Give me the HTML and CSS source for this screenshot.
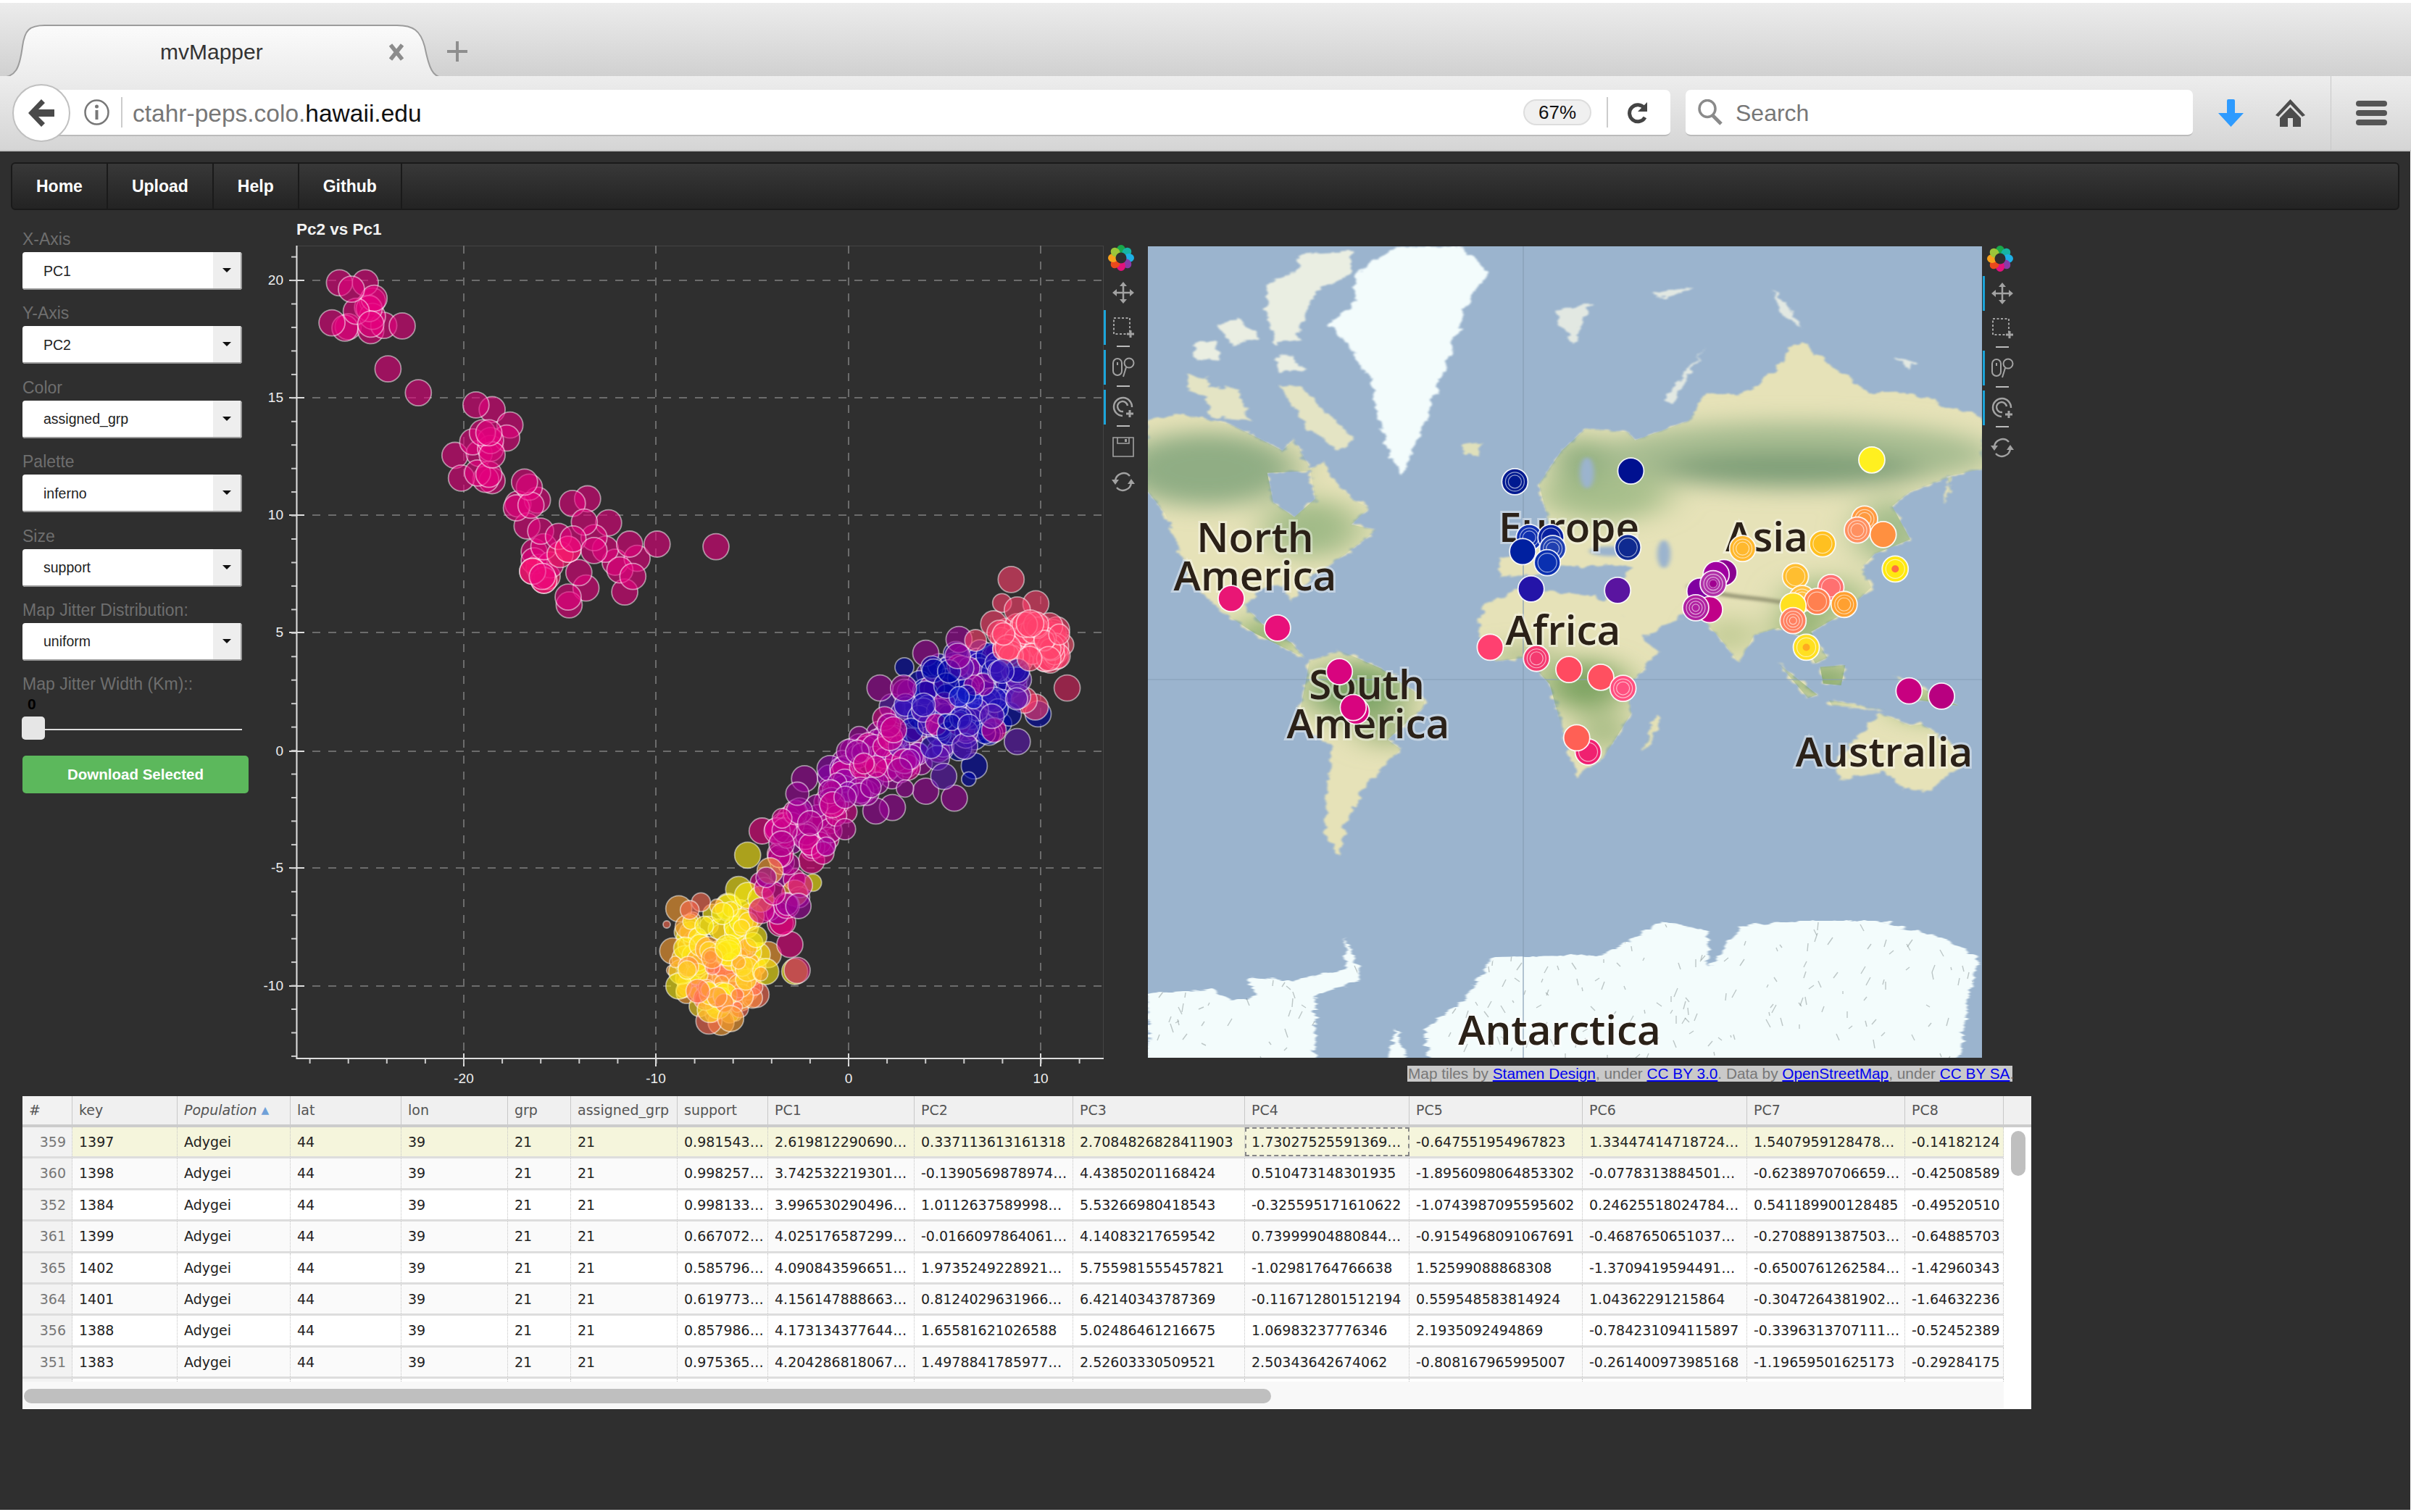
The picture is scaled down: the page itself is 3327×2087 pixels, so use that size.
FILE: index.html
```html
<!DOCTYPE html>
<html lang="en">
  <head>
    <meta charset="UTF-8" />
    <title>mvMapper</title>
    <link rel="stylesheet" href="styles.css">
  </head>
  <body>
    <svg class="icon-defs" width="0" height="0">
      <symbol id="i-pan" viewBox="0 0 32 32">
        <path d="M16 5v22M5 16h22" fill="none" stroke="currentColor" stroke-width="2.5"/>
        <path d="M16 1l5 6h-10zM16 31l-5-6h10zM1 16l6-5v10zM31 16l-6 5v-10z" fill="currentColor"/>
      </symbol>
      <symbol id="i-box" viewBox="0 0 32 32">
        <rect x="3" y="3" width="22" height="22" fill="none" stroke="currentColor" stroke-width="2" stroke-dasharray="3 2.5"/>
        <path d="M26 20v10M21 25h10" stroke="currentColor" stroke-width="3"/>
      </symbol>
      <symbol id="i-wheel" viewBox="0 0 32 32">
        <rect x="2" y="4" width="12" height="23" rx="6" fill="none" stroke="currentColor" stroke-width="2"/>
        <path d="M8 9v4" stroke="currentColor" stroke-width="2"/>
        <circle cx="24" cy="10" r="6.5" fill="none" stroke="currentColor" stroke-width="2"/>
        <path d="M20 16L16 29" stroke="currentColor" stroke-width="2"/>
      </symbol>
      <symbol id="i-tap" viewBox="0 0 32 32">
        <path d="M15 28a12.5 12.5 0 1 1 13-12" fill="none" stroke="currentColor" stroke-width="2.5"/>
        <path d="M16 22a7 7 0 1 1 6-8" fill="none" stroke="currentColor" stroke-width="2.5"/>
        <path d="M25 20v10M20 25h10" stroke="currentColor" stroke-width="3"/>
      </symbol>
      <symbol id="i-save" viewBox="0 0 32 32">
        <path d="M2 3h28v26h-28zM8 3v8h16v-8" fill="none" stroke="currentColor" stroke-width="1.6"/>
        <rect x="18" y="5" width="3" height="4" fill="currentColor"/>
      </symbol>
      <symbol id="i-reset" viewBox="0 0 32 32">
        <path d="M5 15a11.5 11.5 0 0 1 20-7M27 17a11.5 11.5 0 0 1-20 7" fill="none" stroke="currentColor" stroke-width="2.5"/>
        <path d="M0 13h10l-5 7zM22 19h10l-5-7z" fill="currentColor"/>
      </symbol>
      <symbol id="i-logo" viewBox="0 0 36 36">
        <g transform="translate(18 18)">
          <ellipse cx="0" cy="-11" rx="6" ry="7" fill="#19a84c"/>
          <ellipse cx="0" cy="-11" rx="6" ry="7" fill="#17b3a4" transform="rotate(45)"/>
          <ellipse cx="0" cy="-11" rx="6" ry="7" fill="#1eb0e6" transform="rotate(90)"/>
          <ellipse cx="0" cy="-11" rx="6" ry="7" fill="#8a3aa8" transform="rotate(135)"/>
          <ellipse cx="0" cy="-11" rx="6" ry="7" fill="#e3127c" transform="rotate(180)"/>
          <ellipse cx="0" cy="-11" rx="6" ry="7" fill="#ea4a1c" transform="rotate(225)"/>
          <ellipse cx="0" cy="-11" rx="6" ry="7" fill="#f7a11c" transform="rotate(270)"/>
          <ellipse cx="0" cy="-11" rx="6" ry="7" fill="#9cc63a" transform="rotate(315)"/>
          <circle r="7.5" fill="#2f2f2f"/>
        </g>
      </symbol>
    </svg>

    <div class="tabstrip">
      <div class="tab">
        <svg class="tab-shape" viewBox="0 0 610 75" preserveAspectRatio="none">
          <defs>
            <linearGradient id="tab-fill" x1="0" y1="0" x2="0" y2="1">
              <stop offset="0" stop-color="#fbfbfb"/>
              <stop offset="1" stop-color="#ececec"/>
            </linearGradient>
          </defs>
          <path d="M0 73C22 73 27 60 31 30C34 8 40 1 62 1H548C570 1 580 8 586 30C592 60 597 73 612 73V75H0Z" fill="url(#tab-fill)"/>
          <path d="M0 73C22 73 27 60 31 30C34 8 40 1 62 1H548C570 1 580 8 586 30C592 60 597 73 612 73" fill="none" stroke="#9c9c9c" stroke-width="2"/>
        </svg>
        <span class="tab-title">mvMapper</span>
        <svg class="tab-close" width="20" height="24" viewBox="0 0 20 24">
          <path d="M2 2L18 22M18 2L2 22" stroke="#8c8c8c" stroke-width="5.500"/>
        </svg>
      </div>
      <svg class="tab-new" width="28" height="28" viewBox="0 0 28 28">
        <path d="M14 0V28M0 14H28" stroke="#8e8e8e" stroke-width="4"/>
      </svg>
    </div>

    <div class="toolbar">
      <div class="back-btn">
        <svg width="38" height="40" viewBox="0 0 38 40"><path d="M19 1L1 20L19 39L24 34L15 25H37V15H15L24 6Z" fill="#4a4a4a"/></svg>
      </div>
      <div class="urlbar">
        <svg class="info-icon" width="35" height="36" viewBox="0 0 35 36">
          <ellipse cx="17.5" cy="18" rx="16" ry="16.5" fill="none" stroke="#777" stroke-width="2.5"/>
          <path d="M17.5 15v13" stroke="#777" stroke-width="4"/>
          <circle cx="17.5" cy="10" r="2.5" fill="#777"/>
        </svg>
        <span class="url-sep"></span>
        <span class="url"><span class="url-sub">ctahr-peps.colo.</span>hawaii.edu</span>
        <span class="zoom-pill">67%</span>
        <span class="url-sep pill-sep"></span>
        <svg class="reload-icon" width="30" height="31" viewBox="0 0 30 31">
          <path d="M24 9A11.5 11.5 0 1 0 25 22" fill="none" stroke="#444" stroke-width="5"/>
          <path d="M28 1V14H15Z" fill="#444"/>
        </svg>
      </div>
      <div class="searchbar">
        <svg width="36" height="36" viewBox="0 0 36 36">
          <ellipse cx="14" cy="13" rx="11" ry="11.5" fill="none" stroke="#8a8a8a" stroke-width="3.5"/>
          <path d="M21 22L33 34" stroke="#8a8a8a" stroke-width="5"/>
        </svg>
        <span class="search-text">Search</span>
      </div>
      <svg class="tb-download" width="37" height="38" viewBox="0 0 37 38">
        <path d="M13 2Q13 0 15 0H22Q24 0 24 2V19H36L18.5 38L1 19H13Z" fill="#2e9bff"/>
      </svg>
      <svg class="tb-home" width="41" height="38" viewBox="0 0 41 38">
        <path d="M20.500 0L41 22L37 24L20.500 7L4 24L0 22Z" fill="#4d4d4d"/>
        <path d="M20.500 11L35 26V38H24V26H17V38H6V26Z" fill="#4d4d4d"/>
      </svg>
      <span class="tb-divider"></span>
      <div class="tb-menu"><span></span><span></span><span></span></div>
    </div>

    <div class="page">
      <nav class="navbar">
        <a class="nav-item">Home</a>
        <a class="nav-item">Upload</a>
        <a class="nav-item">Help</a>
        <a class="nav-item">Github</a>
      </nav>

      <div class="plots">
        <div class="sidebar">
          <div class="field">
            <label>X-Axis</label>
            <div class="select"><span class="select-value">PC1</span><span class="select-btn"><i></i></span></div>
          </div>
          <div class="field">
            <label>Y-Axis</label>
            <div class="select"><span class="select-value">PC2</span><span class="select-btn"><i></i></span></div>
          </div>
          <div class="field">
            <label>Color</label>
            <div class="select"><span class="select-value">assigned_grp</span><span class="select-btn"><i></i></span></div>
          </div>
          <div class="field">
            <label>Palette</label>
            <div class="select"><span class="select-value">inferno</span><span class="select-btn"><i></i></span></div>
          </div>
          <div class="field">
            <label>Size</label>
            <div class="select"><span class="select-value">support</span><span class="select-btn"><i></i></span></div>
          </div>
          <div class="field">
            <label>Map Jitter Distribution:</label>
            <div class="select"><span class="select-value">uniform</span><span class="select-btn"><i></i></span></div>
          </div>
          <div class="field field-slider">
            <label>Map Jitter Width (Km)::</label>
            <div class="slider-value">0</div>
            <div class="slider"><span class="slider-handle"></span></div>
          </div>
          <button class="download-btn">Download Selected</button>
        </div>

        <div class="chart-col">
          <div class="plot-title">Pc2 vs Pc1</div>
          <div class="plot-row">
            <svg class="scatter" width="1163" height="1162" viewBox="360 338 1163 1162">
              <rect x="409" y="338" width="1114" height="1122" fill="none" stroke="#444" stroke-width="2"/>
              <g id="scatter-grid"></g>
              <g id="scatter-points"></g>
              <g id="scatter-axes"></g>
              <g class="tick-labels tick-left">
                <text x="391" y="392">20</text>
                <text x="391" y="554">15</text>
                <text x="391" y="716">10</text>
                <text x="391" y="878">5</text>
                <text x="391" y="1042">0</text>
                <text x="391" y="1203">-5</text>
                <text x="391" y="1366">-10</text>
              </g>
              <g class="tick-labels tick-bottom">
                <text x="640" y="1494">-20</text>
                <text x="905" y="1494">-10</text>
                <text x="1171" y="1494">0</text>
                <text x="1436" y="1494">10</text>
              </g>
            </svg>
            <div class="tools">
              <svg class="tool-logo"><use href="#i-logo"/></svg>
              <div class="tool"><svg><use href="#i-pan"/></svg></div>
              <div class="tool active"><svg><use href="#i-box"/></svg></div>
              <span class="tool-sep"></span>
              <div class="tool active"><svg><use href="#i-wheel"/></svg></div>
              <span class="tool-sep"></span>
              <div class="tool active"><svg><use href="#i-tap"/></svg></div>
              <span class="tool-sep"></span>
              <div class="tool"><svg><use href="#i-save"/></svg></div>
              <div class="tool"><svg><use href="#i-reset"/></svg></div>
            </div>
          </div>
        </div>

        <div class="map-col">
          <div class="plot-row">
            <svg class="map" width="1151" height="1120" viewBox="1584 339 1151 1120">
              <defs>
                <filter id="coast" x="-5%" y="-5%" width="110%" height="110%">
                  <feTurbulence type="fractalNoise" baseFrequency="0.05" numOctaves="3" seed="4"/>
                  <feDisplacementMap in="SourceGraphic" scale="22" xChannelSelector="R" yChannelSelector="G"/>
                  <feGaussianBlur stdDeviation="2"/>
                </filter>
                <filter id="soft" x="-40%" y="-40%" width="180%" height="180%">
                  <feGaussianBlur stdDeviation="30"/>
                </filter>
                <filter id="ridge" x="-20%" y="-50%" width="140%" height="200%">
                  <feGaussianBlur stdDeviation="4"/>
                </filter>
                <path id="land-na" fill-rule="evenodd" clip-rule="evenodd" d="M101 505L160 492L240 520L290 560L325 590L345 560L372 640L395 620L415 680L445 725L470 745L440 790L482 805L430 870L385 920L352 965L340 1000L328 952L290 962L262 1010L292 1060L340 1110L362 1150L330 1125L280 1085L232 1035L180 965L155 860L130 760L101 700Z M300 650L372 645L380 720L345 770L310 730Z"/>
                <path id="land-eu" d="M690 930L690 880L760 850L768 780L752 680L790 590L830 530L900 540L912 562L1000 510L1030 430L1080 440L1130 400L1190 290L1230 350L1300 432L1360 430L1490 500L1490 640L1430 660L1440 700L1425 735L1440 660L1370 700L1340 740L1370 830L1310 870L1290 905L1305 960L1260 1030L1205 1080L1232 1150L1212 1165L1185 1090L1150 1070L1110 1090L1085 1165L1055 1100L1010 1022L985 1040L920 1105L890 1030L860 1000L905 905L860 900L780 905L740 930Z"/>
                <path id="land-af" d="M660 1010L720 962L840 982L880 1010L930 1110L952 1132L900 1230L906 1300L860 1420L815 1475L790 1340L770 1222L730 1150L680 1160L650 1080Z M945 1310L925 1400L935 1395L952 1320Z"/>
                <path id="land-sa" d="M370 1160L420 1130L490 1180L562 1262L560 1285L500 1372L522 1398L460 1503L432 1594L420 1692L395 1620L400 1496L410 1392L350 1330L360 1250Z"/>
                <path id="land-au" d="M1250 1420L1320 1300L1370 1335L1390 1330L1470 1420L1400 1510L1360 1503L1330 1457L1250 1483Z M1340 1195L1450 1280L1385 1265Z M1220 1175L1262 1170L1255 1225L1225 1220Z M1150 1165L1215 1250L1200 1260Z M1235 1265L1330 1290L1240 1280Z"/>
                <path id="land-ice" d="M101 1110L210 1095L240 1140L280 1120L270 1040L340 1060L430 1010L430 880L450 1000L450 1060L380 1120L380 1390L101 1390Z M500 1390L515 1250L530 1390Z M570 1390L560 1260L620 1150L680 960L860 950L960 810L1030 850L1035 1000L1090 830L1180 810L1320 810L1420 880L1485 960L1470 1100L1450 1390Z"/>
                <clipPath id="land-clip" transform="translate(1500 320) scale(.8292 .5102)">
                  <use href="#land-na"/><use href="#land-eu"/><use href="#land-af"/><use href="#land-sa"/><use href="#land-au"/>
                </clipPath>
                <clipPath id="ice-clip" transform="translate(1500 1000) scale(.8292 .3333)">
                  <use href="#land-ice"/>
                </clipPath>
              </defs>
              <rect x="1584" y="339" width="1151" height="1120" fill="#9bb4ce"/>
              <g transform="translate(1500 320) scale(.8292 .5102)" filter="url(#coast)">
                <use href="#land-na" fill="#e6e2b8"/>
                <use href="#land-eu" fill="#e6e2b8"/>
                <use href="#land-af" fill="#e6e2b8"/>
                <use href="#land-sa" fill="#e6e2b8"/>
                <use href="#land-au" fill="#e6e2b8"/>
                <path d="M320 410L360 420L400 490L445 560L420 590L370 530L340 470Z M190 420L250 420L270 510L210 500Z M165 385L200 395L205 440L170 430Z" fill="#e4e4c4"/>
                <path d="M625 575L660 565L650 600L630 600Z" fill="#dfe0bb"/>
                <path d="M300 140L350 100L350 60L440 50L440 110L380 160L350 290L310 300L300 220Z M215 250L250 230L290 290L240 300Z M180 300L215 290L220 345L180 340Z M310 340L345 330L360 370L320 380Z" fill="#eaeee2"/>
                <path d="M780 210L840 190L810 300L790 260Z M1030 310L960 450L975 465L1005 370Z M1140 150L1195 260L1150 220Z M1345 340L1380 350L1370 370Z M940 165L1010 145L960 180Z" fill="#e2e8e2"/>
              </g>
              <g clip-path="url(#land-clip)">
                <g transform="translate(1500 320) scale(.8292 .5102)" filter="url(#soft)">
                  <ellipse cx="1180" cy="600" rx="330" ry="90" fill="#a8bd92"/>
                  <ellipse cx="1170" cy="640" rx="220" ry="50" fill="#7f9f78"/>
                  <ellipse cx="860" cy="710" rx="110" ry="70" fill="#a8bf8c"/>
                  <ellipse cx="820" cy="620" rx="45" ry="70" fill="#8fae7f"/>
                  <ellipse cx="1340" cy="810" rx="60" ry="90" fill="#a2bc8a"/>
                  <ellipse cx="1230" cy="990" rx="70" ry="55" fill="#a2bc84"/>
                  <ellipse cx="1070" cy="1090" rx="40" ry="50" fill="#bcc890"/>
                  <ellipse cx="1190" cy="1070" rx="40" ry="60" fill="#8cae6c"/>
                  <ellipse cx="200" cy="640" rx="150" ry="100" fill="#90ad84"/>
                  <ellipse cx="375" cy="800" rx="80" ry="80" fill="#a2bb88"/>
                  <ellipse cx="300" cy="1090" rx="55" ry="50" fill="#8fb070"/>
                  <ellipse cx="450" cy="1240" rx="85" ry="80" fill="#7da466"/>
                  <ellipse cx="500" cy="1345" rx="50" ry="45" fill="#a0b57f"/>
                  <ellipse cx="830" cy="1225" rx="70" ry="70" fill="#7fa463"/>
                  <ellipse cx="725" cy="1145" rx="60" ry="22" fill="#9ab078"/>
                  <ellipse cx="860" cy="1350" rx="40" ry="55" fill="#a0b87f"/>
                  <ellipse cx="1410" cy="1280" rx="70" ry="40" fill="#8fb070"/>
                  <ellipse cx="1230" cy="1210" rx="60" ry="50" fill="#86a96a"/>
                </g>
                <path transform="translate(1500 320) scale(.8292 .5102)" filter="url(#ridge)" d="M1000 955C1060 990 1120 985 1170 1005" fill="none" stroke="#8a8a6a" stroke-width="9"/>
              </g>
              <g transform="translate(1500 320) scale(.8292 .5102)" filter="url(#ridge)" fill="#9bb4ce">
                <ellipse cx="960" cy="870" rx="11" ry="38"/>
                <ellipse cx="870" cy="862" rx="34" ry="13"/>
                <ellipse cx="832" cy="650" rx="12" ry="42"/>
              </g>
              <g transform="translate(1500 320) scale(.8292 .5102)" filter="url(#coast)">
                <path d="M450 110L510 38L625 38L668 112L640 170L610 300L570 480L525 655L500 590L470 400L440 320L402 250L440 200Z" fill="#f3fcfc"/>
              </g>
              <g transform="translate(1500 1000) scale(.8292 .3333)" filter="url(#coast)">
                <use href="#land-ice" fill="#f3fcfc"/>
              </g>
              <g id="ice-noise" clip-path="url(#ice-clip)"></g>
              <path d="M2102 339V1459M1584 937H2735" stroke="#869db5" stroke-width="1.2" fill="none"/>
              <g class="map-label">
                <text x="1732" y="761">North</text>
                <text x="1732" y="814">America</text>
                <text x="2165" y="747">Europe</text>
                <text x="2438" y="760">Asia</text>
                <text x="2157" y="889">Africa</text>
                <text x="1886" y="964">South</text>
                <text x="1888" y="1018">America</text>
                <text x="2600" y="1057">Australia</text>
                <text x="2152" y="1441">Antarctica</text>
              </g>
              <g id="map-markers"></g>
            </svg>
            <div class="tools tools-map">
              <svg class="tool-logo"><use href="#i-logo"/></svg>
              <div class="tool active"><svg><use href="#i-pan"/></svg></div>
              <div class="tool"><svg><use href="#i-box"/></svg></div>
              <span class="tool-sep"></span>
              <div class="tool active"><svg><use href="#i-wheel"/></svg></div>
              <span class="tool-sep"></span>
              <div class="tool active"><svg><use href="#i-tap"/></svg></div>
              <span class="tool-sep"></span>
              <div class="tool"><svg><use href="#i-reset"/></svg></div>
            </div>
          </div>
          <div class="attribution">Map tiles by <a>Stamen Design</a>, under <a>CC BY 3.0</a>. Data by <a>OpenStreetMap</a>, under <a>CC BY SA</a>.</div>
        </div>
      </div>

      <div class="grid">
        <div class="grid-row grid-head">
          <div>#</div><div>key</div><div class="sorted">Population <span class="sort-arrow">▲</span></div><div>lat</div><div>lon</div><div>grp</div><div>assigned_grp</div><div>support</div><div>PC1</div><div>PC2</div><div>PC3</div><div>PC4</div><div>PC5</div><div>PC6</div><div>PC7</div><div>PC8</div>
        </div>
        <div class="grid-row selected">
          <div class="num">359</div><div>1397</div><div>Adygei</div><div>44</div><div>39</div><div>21</div><div>21</div><div>0.981543…</div><div>2.619812290690…</div><div>0.337113613161318</div><div>2.7084826828411903</div><div class="active-cell">1.73027525591369…</div><div>-0.647551954967823</div><div>1.33447414718724…</div><div>1.5407959128478…</div><div>-0.14182124</div>
        </div>
        <div class="grid-row odd">
          <div class="num">360</div><div>1398</div><div>Adygei</div><div>44</div><div>39</div><div>21</div><div>21</div><div>0.998257…</div><div>3.742532219301…</div><div>-0.1390569878974…</div><div>4.43850201168424</div><div>0.510473148301935</div><div>-1.8956098064853302</div><div>-0.0778313884501…</div><div>-0.6238970706659…</div><div>-0.42508589</div>
        </div>
        <div class="grid-row">
          <div class="num">352</div><div>1384</div><div>Adygei</div><div>44</div><div>39</div><div>21</div><div>21</div><div>0.998133…</div><div>3.996530290496…</div><div>1.0112637589998…</div><div>5.53266980418543</div><div>-0.325595171610622</div><div>-1.0743987095595602</div><div>0.24625518024784…</div><div>0.541189900128485</div><div>-0.49520510</div>
        </div>
        <div class="grid-row odd">
          <div class="num">361</div><div>1399</div><div>Adygei</div><div>44</div><div>39</div><div>21</div><div>21</div><div>0.667072…</div><div>4.025176587299…</div><div>-0.0166097864061…</div><div>4.14083217659542</div><div>0.73999904880844…</div><div>-0.9154968091067691</div><div>-0.4687650651037…</div><div>-0.2708891387503…</div><div>-0.64885703</div>
        </div>
        <div class="grid-row">
          <div class="num">365</div><div>1402</div><div>Adygei</div><div>44</div><div>39</div><div>21</div><div>21</div><div>0.585796…</div><div>4.090843596651…</div><div>1.9735249228921…</div><div>5.755981555457821</div><div>-1.02981764766638</div><div>1.52599088868308</div><div>-1.3709419594491…</div><div>-0.6500761262584…</div><div>-1.42960343</div>
        </div>
        <div class="grid-row odd">
          <div class="num">364</div><div>1401</div><div>Adygei</div><div>44</div><div>39</div><div>21</div><div>21</div><div>0.619773…</div><div>4.156147888663…</div><div>0.8124029631966…</div><div>6.42140343787369</div><div>-0.116712801512194</div><div>0.559548583814924</div><div>1.04362291215864</div><div>-0.3047264381902…</div><div>-1.64632236</div>
        </div>
        <div class="grid-row">
          <div class="num">356</div><div>1388</div><div>Adygei</div><div>44</div><div>39</div><div>21</div><div>21</div><div>0.857986…</div><div>4.173134377644…</div><div>1.65581621026588</div><div>5.02486461216675</div><div>1.06983237776346</div><div>2.1935092494869</div><div>-0.784231094115897</div><div>-0.3396313707111…</div><div>-0.52452389</div>
        </div>
        <div class="grid-row odd">
          <div class="num">351</div><div>1383</div><div>Adygei</div><div>44</div><div>39</div><div>21</div><div>21</div><div>0.975365…</div><div>4.204286818067…</div><div>1.4978841785977…</div><div>2.52603330509521</div><div>2.50343642674062</div><div>-0.808167965995007</div><div>-0.261400973985168</div><div>-1.19659501625173</div><div>-0.29284175</div>
        </div>
        <div class="grid-row grid-stub">
          <div></div><div></div><div></div><div></div><div></div><div></div><div></div><div></div><div></div><div></div><div></div><div></div><div></div><div></div><div></div><div></div>
        </div>
        <div class="hscroll"><span class="hscroll-thumb"></span></div>
        <span class="vscroll-thumb"></span>
      </div>
    </div>

    <script src="script.js"></script>
  </body>
</html>
```

FILE: styles.css
```css
html,
body {
  margin: 0;
  padding: 0;
  background-color: #fff;
}

body {
  width: 3327px;
  height: 2087px;
  overflow: hidden;
  font-family: "Liberation Sans", Arial, sans-serif;
}

.icon-defs {
  position: absolute;
}

/* browser chrome */
.tabstrip {
  display: flex;
  align-items: flex-end;
  box-sizing: border-box;
  height: 105px;
  margin-top: 4px;
  margin-bottom: -4px;
  background: linear-gradient(#ececec, #d0d0d0);
  border-bottom: 2px solid #aaa;
}

.tab {
  position: relative;
  display: flex;
  align-items: center;
  box-sizing: border-box;
  width: 610px;
  height: 75px;
  margin-bottom: -2px;
  padding: 0 0 0 221px;
}

.tab-shape {
  position: absolute;
  left: 0;
  top: 0;
  width: 610px;
  height: 75px;
}

.tab-title {
  position: relative;
  font-size: 30px;
  color: #333;
}

.tab-close {
  position: relative;
  margin-left: 174px;
}

.tab-new {
  margin-left: 7px;
  margin-bottom: 22px;
}

.toolbar {
  position: relative;
  display: flex;
  align-items: center;
  box-sizing: border-box;
  height: 104px;
  padding-left: 17px;
  background: linear-gradient(#ededed, #d5d5d5);
  border-bottom: 2px solid #c4c4c4;
}

.back-btn {
  position: relative;
  z-index: 1;
  display: flex;
  align-items: center;
  justify-content: center;
  box-sizing: border-box;
  flex: none;
  width: 80px;
  height: 80px;
  margin-right: -20px;
  background-color: #fff;
  border: 2px solid #c0c0c0;
  border-radius: 50%;
}

.urlbar {
  display: flex;
  align-items: center;
  box-sizing: border-box;
  width: 2228px;
  height: 64px;
  background-color: #fff;
  border-bottom: 2px solid #bbb;
  border-radius: 0 7px 7px 0;
}

.info-icon {
  margin-left: 39px;
}

.url-sep {
  width: 2px;
  height: 42px;
  margin-left: 16px;
  background-color: #ccc;
}

.url {
  margin-left: 14px;
  padding-top: 3px;
  font-size: 33.500px;
  color: #111;
}

.url-sub {
  color: #777;
}

.zoom-pill {
  margin-left: auto;
  box-sizing: border-box;
  width: 94px;
  height: 36px;
  line-height: 32px;
  text-align: center;
  font-size: 26px;
  color: #111;
  background-color: #f0f0f0;
  border: 2px solid #ddd;
  border-radius: 18px;
}

.pill-sep {
  margin-left: 21px;
}

.reload-icon {
  margin: 0 30px 0 26px;
}

.searchbar {
  display: flex;
  align-items: center;
  box-sizing: border-box;
  width: 700px;
  height: 64px;
  margin-left: 21px;
  padding-left: 16px;
  background-color: #fff;
  border-bottom: 2px solid #bbb;
  border-radius: 7px;
}

.search-text {
  margin-left: 17px;
  padding-top: 3px;
  font-size: 32px;
  color: #777;
}

.tb-download {
  margin-left: 34px;
}

.tb-home {
  margin-left: 43px;
}

.tb-divider {
  width: 1px;
  height: 102px;
  margin-left: 35px;
  background-color: #c8c8c8;
}

.tb-menu {
  display: flex;
  flex-direction: column;
  gap: 5px;
  margin-left: 34px;
}

.tb-menu span {
  display: block;
  width: 43px;
  height: 8px;
  background-color: #555;
  border-radius: 4px;
}

/* page */
.page {
  box-sizing: border-box;
  width: 3326px;
  height: 1875px;
  padding: 15px 0 0;
  background-color: #2f2f2f;
}

.navbar {
  display: flex;
  box-sizing: border-box;
  height: 66px;
  margin: 0 15px 11px;
  background: linear-gradient(#383838, #232323);
  border: 2px solid #1a1a1a;
  border-radius: 6px;
}

.nav-item {
  display: flex;
  align-items: center;
  box-sizing: border-box;
  padding: 0 33px;
  font-size: 23px;
  font-weight: bold;
  color: #fff;
  border-right: 2px solid #1a1a1a;
}

.plots {
  display: flex;
  height: 1212px;
}

.sidebar {
  box-sizing: border-box;
  flex: none;
  width: 360px;
  padding: 18px 0 0 31px;
}

.field {
  width: 303px;
  margin-bottom: 21.400px;
}

.field label {
  display: block;
  height: 22px;
  margin-bottom: 7px;
  line-height: 22px;
  font-size: 23px;
  white-space: nowrap;
  color: #6e6e6e;
}

.select {
  display: flex;
  align-items: center;
  height: 52px;
  background-color: #fff;
  border-radius: 4px;
  overflow: hidden;
  box-shadow: inset -2px -2px 0 #999;
}

.select-value {
  flex: 1;
  padding-left: 29px;
  font-size: 19.500px;
  color: #222;
}

.select-btn {
  display: flex;
  align-items: center;
  justify-content: center;
  align-self: stretch;
  width: 38px;
  margin-right: 2px;
  margin-bottom: 2px;
  background-color: #eee;
}

.select-btn i {
  width: 0;
  height: 0;
  border-left: 6px solid transparent;
  border-right: 6px solid transparent;
  border-top: 6px solid #111;
}

.field-slider {
  margin-bottom: 21px;
}

.slider-value {
  height: 20px;
  margin-top: 5px;
  padding-left: 7px;
  line-height: 20px;
  font-size: 21px;
  font-weight: bold;
  color: #000;
}

.slider {
  position: relative;
  height: 2px;
  margin-top: 24px;
  margin-bottom: 0;
  background-color: #ddd;
}

.slider-handle {
  position: absolute;
  left: -1px;
  top: -17px;
  width: 32px;
  height: 32px;
  background-color: #e6e6e6;
  border-radius: 5px;
}

.download-btn {
  display: block;
  width: 312px;
  height: 52px;
  margin-top: 35px;
  padding: 0;
  font-family: inherit;
  font-size: 20.500px;
  font-weight: bold;
  color: #fff;
  background-color: #5cb85c;
  border: none;
  border-radius: 5px;
}

.chart-col {
  flex: none;
  width: 1224px;
}

.plot-title {
  height: 38px;
  padding-left: 49px;
  line-height: 32px;
  font-size: 22.500px;
  font-weight: bold;
  color: #f2f2f2;
}

.plot-row {
  display: flex;
}

.scatter,
.map {
  display: block;
  flex: none;
}

.tick-labels text {
  font-size: 19px;
  fill: #eee;
}

.tick-left text {
  text-anchor: end;
}

.tick-bottom text {
  text-anchor: middle;
}

.tools {
  display: flex;
  flex-direction: column;
  width: 61px;
  color: #a2a2a2;
}

.tools-map {
  margin-left: 1px;
}

.tool-logo {
  width: 36px;
  height: 36px;
  margin: -1px 0 6px 6px;
}

.tool {
  display: flex;
  align-items: center;
  box-sizing: border-box;
  width: 54px;
  height: 48px;
  padding-left: 8px;
  border-left: 3px solid transparent;
}

.tool.active {
  border-left-color: #1ba5da;
}

.tool svg {
  width: 32px;
  height: 32px;
}

.tool-sep {
  display: block;
  width: 18px;
  height: 2px;
  margin: 1px 0 4px 18px;
  background-color: #bbb;
}

.map-col {
  flex: none;
  display: flex;
  flex-direction: column;
  width: 1216px;
  padding-top: 39px;
}

.map-label text {
  font-family: "Open Sans", sans-serif;
  font-size: 56.500px;
  font-weight: 600;
  text-anchor: middle;
  fill: #2b2118;
  stroke: rgba(255, 255, 255, 0.4);
  stroke-width: 6px;
  paint-order: stroke;
}

.attribution {
  align-self: flex-end;
  box-sizing: border-box;
  width: 835px;
  height: 22px;
  margin-top: 11px;
  margin-right: 23px;
  padding-left: 1px;
  line-height: 22px;
  font-size: 20.800px;
  white-space: nowrap;
  color: #777;
  background-color: #c9c9c9;
}

.attribution a {
  color: #00e;
  text-decoration: underline;
}

/* data table */
.grid {
  position: relative;
  width: 2772px;
  height: 432px;
  margin-left: 31px;
  background-color: #fff;
  font-family: "DejaVu Sans", sans-serif;
  font-size: 19px;
  color: #222;
}

.grid-row {
  display: grid;
  grid-template-columns: 69px 145px 156px 153px 147px 87px 147px 125px 202px 219px 237px 227px 239px 227px 218px 136px;
  box-sizing: border-box;
  width: 2734px;
  height: 43.400px;
  background-color: #fff;
  border-bottom: 3px solid #ddd;
}

.grid-row > div {
  box-sizing: border-box;
  padding: 0 0 0 9px;
  line-height: 40px;
  white-space: nowrap;
  overflow: hidden;
  border-right: 1px dotted #c4c4c4;
}

.grid-row > div:first-child {
  background-color: #f2f2f2;
}

.grid-row.odd {
  background-color: #fafafa;
}

.grid-row.selected {
  background-color: #f5f5dc;
}

.grid-row .num {
  padding: 0 8px 0 0;
  text-align: right;
  color: #777;
}

.grid-head {
  width: 100%;
  height: 43px;
  background-color: #f0f0f0;
  border-bottom: 4px solid #ccc;
  color: #555;
}

.grid-head > div {
  line-height: 39px;
  border-right: 1px solid #c8c8c8;
}

.sorted {
  font-style: italic;
}

.sort-arrow {
  font-style: normal;
  font-size: 14px;
  vertical-align: 2px;
  color: #6fa0d8;
}

.active-cell {
  outline: 2px dashed #888;
  outline-offset: -2px;
}

.grid-stub {
  height: 4px;
  border-bottom: none;
}

.hscroll {
  box-sizing: border-box;
  width: 2734px;
  height: 37px;
  padding: 10px 0 0 2px;
  background-color: #f8f8f8;
}

.hscroll-thumb {
  display: block;
  width: 1721px;
  height: 20px;
  background-color: #bfbfbf;
  border-radius: 10px;
}

.vscroll-thumb {
  position: absolute;
  left: 2744px;
  top: 48px;
  width: 20px;
  height: 62px;
  background-color: #bfbfbf;
  border-radius: 10px;
}
```

FILE: script.js
```js
const NS = "http://www.w3.org/2000/svg";

function add(parent, tag, attrs) {
  const el = document.createElementNS(NS, tag);
  for (const k in attrs) el.setAttribute(k, attrs[k]);
  parent.appendChild(el);
  return el;
}

// small seeded random so the picture is the same on every load
let seed = 20817;
function rnd() {
  seed = (seed + 0x6d2b79f5) | 0;
  let t = Math.imul(seed ^ (seed >>> 15), 1 | seed);
  t = (t + Math.imul(t ^ (t >>> 7), 61 | t)) ^ t;
  return ((t ^ (t >>> 14)) >>> 0) / 4294967296;
}

// axes and grid
const grid = document.getElementById("scatter-grid");
const axes = document.getElementById("scatter-axes");
const yMajor = [386, 548, 710, 872, 1036, 1197, 1360];
const xMajor = [640, 905, 1171, 1436];

yMajor.forEach((y) => {
  add(grid, "path", { d: `M409 ${y}H1523`, stroke: "#6c6c6c", "stroke-width": 2, "stroke-dasharray": "11 11" });
  add(axes, "path", { d: `M399 ${y}H420`, stroke: "#ddd", "stroke-width": 2 });
});
xMajor.forEach((x) => {
  add(grid, "path", { d: `M${x} 338V1460`, stroke: "#6c6c6c", "stroke-width": 2, "stroke-dasharray": "11 11" });
  add(axes, "path", { d: `M${x} 1453V1471`, stroke: "#ddd", "stroke-width": 2 });
});
for (let y = 353.6; y < 1458; y += 32.45) {
  add(axes, "path", { d: `M402 ${y.toFixed(1)}H409`, stroke: "#ccc", "stroke-width": 2 });
}
for (let x = 1171 - 53.1 * 14; x < 1520; x += 53.1) {
  if (x > 412) add(axes, "path", { d: `M${x.toFixed(1)} 1461V1467`, stroke: "#ccc", "stroke-width": 2 });
}
add(axes, "path", { d: "M409.500 338V1460H1523", fill: "none", stroke: "#ddd", "stroke-width": 2 });

// scatter points
const PINK = "#e6007e";
const RED = "#ff3f6c";
const BLUE = "#0006a8";
const INDIGO = "#5a14b0";
const PURPLE = "#9a0098";
const MAG = "#d6008a";
const YEL = "#ffee10";
const ORG = "#ffa030";
const SAL = "#ff6a50";

const points = [];
const z4 = (x, y) => [380 + x / 2.24, 300 + y / 2.8];
const z5 = (x, y) => [1000 + x / 2.613, 750 + y / 2.09];
const z11 = (x, y) => [880 + x / 3, 1120 + y / 3];

function put(conv, color, list) {
  list.forEach(([x, y, r]) => {
    const [px, py] = conv(x, y);
    points.push([px, py, r || 18, color]);
  });
}

function scatter(cx, cy, ax, ay, tilt, n, colors, rMin, rMax) {
  for (let i = 0; i < n; i++) {
    const a = rnd() * Math.PI * 2;
    const d = Math.sqrt(rnd());
    const dx = Math.cos(a) * d * ax;
    const dy = Math.sin(a) * d * ay;
    points.push([
      cx + dx * Math.cos(tilt) - dy * Math.sin(tilt),
      cy + dx * Math.sin(tilt) + dy * Math.cos(tilt),
      rMin + rnd() * (rMax - rMin),
      colors[Math.floor(rnd() * colors.length)],
    ]);
  }
}

put(z4, PINK, [
  [198, 250], [278, 250], [235, 275], [305, 310], [300, 320], [290, 350], [250, 360], [175, 405],
  [392, 417], [225, 420], [215, 425], [295, 410], [300, 380], [335, 415], [295, 435], [285, 345],
  [348, 583], [442, 675], [620, 722], [670, 740], [725, 800], [640, 830], [660, 830], [715, 850],
  [610, 865], [665, 860], [555, 917], [630, 910], [670, 915], [665, 890], [575, 1005], [625, 985],
  [660, 990], [670, 1015], [650, 1010], [770, 1020], [785, 1040], [810, 1090], [745, 1120], [750, 1105],
  [790, 1110], [965, 1085], [918, 1103], [955, 1175], [1030, 1178], [778, 1190], [820, 1210], [875, 1230],
  [1180, 1260], [1362, 1270], [985, 1235], [985, 1285], [920, 1240], [905, 1280], [830, 1270], [800, 1290],
  [1020, 1280], [1095, 1260], [1118, 1315], [1050, 1330], [1065, 1360], [1105, 1385], [1080, 1445],
  [938, 1370], [960, 1430], [908, 1495], [905, 1465], [795, 1365], [830, 1400], [825, 1385], [850, 1340], [800, 1325],
]);
put(z4, "#ff1a6e", [[795, 1365], [830, 1400], [880, 1300], [905, 1280], [815, 1350], [840, 1385]]);

put(z5, RED, [
  [1033, 102], [1000, 170, 13], [1122, 172], [1055, 190], [970, 230], [905, 278, 15], [1185, 255],
  [1120, 470], [1080, 450],
]);
put(z5, "#d8205c", [[1235, 415]]);
put(z5, PURPLE, [
  [845, 275], [725, 315], [560, 415], [645, 415], [485, 555, 14], [535, 590], [725, 713], [828, 733],
  [288, 677], [262, 720, 16], [270, 770], [605, 760], [545, 770], [430, 705], [385, 740], [490, 710], [650, 705, 12],
]);
put(z5, INDIGO, [[1055, 570], [790, 670], [1050, 375]]);
put(z5, BLUE, [[648, 355, 13], [880, 678, 10], [900, 640], [1130, 490]]);

scatter(1310, 975, 112, 64, -0.55, 62, [PURPLE, MAG, INDIGO], 14, 18);
scatter(1328, 965, 88, 62, -0.5, 115, [BLUE, BLUE, INDIGO, "#2a10b8"], 14, 18);
scatter(1345, 975, 46, 26, -0.5, 36, [BLUE, "#1020d0"], 9, 15);
scatter(1205, 1056, 72, 36, -0.45, 62, [PURPLE, PURPLE, "#8a00a8", MAG], 13, 18);
scatter(1115, 1147, 62, 38, -0.55, 52, [PURPLE, MAG, MAG, "#b0008c"], 13, 18);
scatter(1075, 1235, 34, 30, 0, 14, [MAG, PURPLE], 14, 18);
scatter(1425, 886, 50, 28, 0.1, 72, [RED, RED, "#ff5070"], 14, 19);

put(z11, PINK, [[515, 78], [600, 100], [630, 548], [590, 460], [600, 455], [590, 175], [720, 200]]);
put(z11, YEL, [[455, 178], [418, 320], [725, 292, 12], [375, 390], [375, 395], [170, 720], [530, 660], [455, 345], [510, 360], [650, 660]]);
put(z11, ORG, [[548, 243], [170, 400], [328, 390, 10], [650, 335], [540, 590], [470, 430], [345, 870], [385, 855], [145, 575], [140, 655, 7], [155, 620, 8]]);
put(z11, SAL, [[215, 405, 13], [262, 373, 13], [120, 465, 5], [490, 755], [295, 865]]);
put(z11, "#d01870", [[660, 655]]);

scatter(990, 1322, 58, 76, 0.2, 100, [YEL, YEL, "#ffd820", ORG], 10, 18);
scatter(1000, 1350, 54, 38, 0.2, 52, [ORG, SAL, "#ff8c40"], 8, 17);
scatter(1000, 1385, 22, 30, 0, 12, [ORG, SAL, YEL], 7, 13);

const holder = document.getElementById("scatter-points");
// shuffle so the colours lie over each other
for (let i = points.length - 1; i > 0; i--) {
  const j = Math.floor(rnd() * (i + 1));
  [points[i], points[j]] = [points[j], points[i]];
}
points.forEach(([cx, cy, r, fill]) => {
  add(holder, "circle", {
    cx: cx.toFixed(1), cy: cy.toFixed(1), r: r.toFixed(1), fill,
    "fill-opacity": 0.6, stroke: "#fff", "stroke-opacity": 0.5, "stroke-width": 1.8,
  });
});

// ice cracks on Antarctica
const ice = document.getElementById("ice-noise");
for (let i = 0; i < 260; i++) {
  const x = 1584 + rnd() * 1151;
  const y = 1270 + rnd() * 190;
  const dx = (rnd() - 0.5) * 14;
  add(ice, "path", {
    d: `M${x.toFixed(0)} ${y.toFixed(0)}l${dx.toFixed(0)} ${(3 + rnd() * 9).toFixed(0)}`,
    stroke: "#7a8684", "stroke-width": 1.4, "stroke-opacity": 0.45,
  });
}

// map markers, [x, y, fill, number of rings, centre fill]
const markers = [
  [240, 990, "#e91675"], [317, 1070, "#e8107a"], [420, 1188, "#d8047f"], [448, 1295, "#d8047f"], [443, 1285, "#d8047f"],
  [671, 1122, "#ff4070"], [748, 1152, "#f43a70", 2], [802, 1182, "#ff4a60"], [855, 1203, "#ff5060"], [892, 1233, "#ff5080", 2],
  [834, 1405, "#f02070", 1], [815, 1367, "#ff6055"],
  [712, 674, "#001a90", 2], [905, 645, "#001090"], [900, 852, "#0f2a90", 1], [736, 825, "#1030b0", 2], [772, 825, "#0820a0", 1],
  [775, 855, "#2040b0", 2], [725, 863, "#0020a0"], [766, 893, "#0a30b0", 1], [739, 964, "#2414a8"],
  [883, 968, "#5a14a0"], [1060, 920, "#8a0090"], [1047, 925, "#a000a0"], [1020, 970, "#8000a0"], [1036, 1020, "#c00088"],
  [1042, 950, "#b030a8", 3, "#a00090"], [1013, 1015, "#b020a0", 3],
  [1091, 855, "#ffb82e", 2], [1224, 842, "#ffc020", 1], [1179, 930, "#ffbe30", 1], [1294, 775, "#ff9a40", 2],
  [1282, 805, "#ff9060", 2], [1325, 817, "#ff9040"], [1345, 910, "#ffe810", 1, "#ff7040"], [1306, 615, "#fff020"],
  [1238, 960, "#ff7070", 1], [1260, 1006, "#ffa030", 2], [1190, 990, "#ffc040", 2], [1215, 998, "#ff8050", 1],
  [1175, 1010, "#ffe020"], [1175, 1050, "#ff8060", 3], [1197, 1122, "#ffe020", 1, "#ffaa20"],
  [1368, 1240, "#c80080"], [1422, 1254, "#b80080"],
];
const mapGroup = document.getElementById("map-markers");
markers.forEach(([zx, zy, fill, rings, centre]) => {
  const cx = 1500 + zx / 1.206;
  const cy = 320 + zy / 1.96;
  add(mapGroup, "circle", { cx, cy, r: 18, fill, stroke: "#fff", "stroke-width": 1.8, "stroke-opacity": 0.9 });
  for (let i = 0; i < (rings || 0); i++) {
    add(mapGroup, "circle", { cx, cy, r: 13 - i * 4, fill: "none", stroke: "#fff", "stroke-width": 1.2, "stroke-opacity": 0.6 });
  }
  if (centre) add(mapGroup, "circle", { cx, cy, r: 5, fill: centre });
});
```
